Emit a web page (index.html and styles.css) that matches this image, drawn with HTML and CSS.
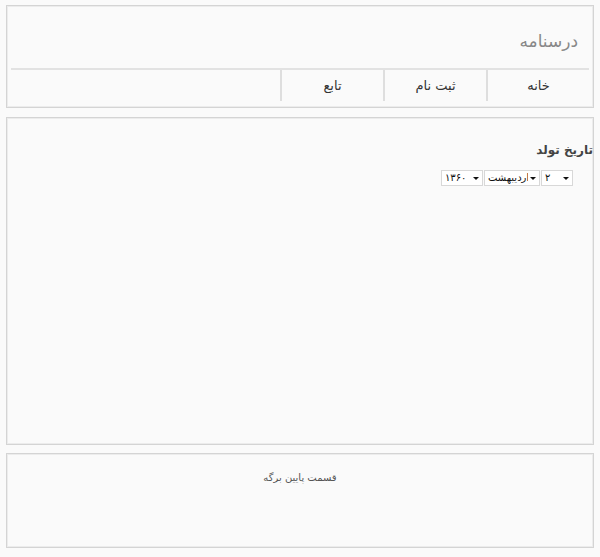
FILE: index.html
```html
<!DOCTYPE html>
<html lang="fa" dir="rtl">
<head>
    <meta charset="UTF-8">
    <title>درسنامه</title>
    <link rel="stylesheet" href="styles.css">
</head>
<body>
    <div class="header box">
        <h1 class="site-title">درسنامه</h1>
        <ul class="nav">
            <li><a href="#">خانه</a></li>
            <li><a href="#">ثبت نام</a></li>
            <li><a href="#">تابع</a></li>
        </ul>
    </div>

    <div class="content box">
        <h3>تاریخ تولد</h3>
        <div class="date-row">
            <span class="select-wrap">
                <select class="sel-day">
                    <option>۱</option>
                    <option selected>۲</option>
                    <option>۳</option>
                </select>
            </span>
            <span class="select-wrap">
                <select class="sel-month">
                    <option>فروردین</option>
                    <option selected>اردیبهشت</option>
                    <option>خرداد</option>
                </select>
            </span>
            <span class="select-wrap">
                <select class="sel-year">
                    <option>۱۳۵۹</option>
                    <option selected>۱۳۶۰</option>
                    <option>۱۳۶۱</option>
                </select>
            </span>
        </div>
    </div>

    <div class="footer box">
        <p>قسمت پایین برگه</p>
    </div>
</body>
</html>
```

FILE: styles.css
```css
* {
    margin: 0;
    padding: 0;
    box-sizing: border-box;
}

body {
    font-family: Tahoma, 'DejaVu Sans', sans-serif;
    background: #fafafa;
    color: #333;
    padding: 5px 6px;
}

.box {
    background: #fafafa;
    border: 1px solid #d4d4d4;
    box-shadow: inset 0 0 0 1px #ececec;
    margin-bottom: 9px;
}

.header {
    padding: 0 4px 5px;
    height: 103px;
}

.site-title {
    font-size: 17px;
    font-weight: normal;
    color: #888;
    height: 64px;
    line-height: 1;
    padding: 27px 11px 0 0;
    border-bottom: 2px solid #e2e2e2;
}

.nav {
    list-style: none;
    display: flex;
}

.nav li {
    width: 103px;
    height: 31px;
    border-left: 2px solid #dedede;
    text-align: center;
    line-height: 31px;
    font-size: 13px;
}

.nav a {
    color: #333;
    text-decoration: none;
}

.content {
    height: 328px;
    padding-top: 25px;
    margin-bottom: 8px;
}

.content h3 {
    font-size: 12px;
    font-weight: bold;
    color: #444;
    margin-bottom: 13px;
}

.date-row {
    display: flex;
    padding-right: 20px;
    gap: 1px;
}

.select-wrap {
    position: relative;
    display: block;
}

.select-wrap::after {
    content: "";
    position: absolute;
    right: 4px;
    top: 7px;
    border-left: 3px solid transparent;
    border-right: 3px solid transparent;
    border-top: 3px solid #111;
    pointer-events: none;
}

.date-row select {
    display: block;
    appearance: none;
    -webkit-appearance: none;
    direction: ltr;
    font-family: Tahoma, 'DejaVu Sans', sans-serif;
    font-size: 10px;
    line-height: 14px;
    height: 16px;
    border: 1px solid #d8d8d8;
    border-radius: 0;
    background: #fff;
    color: #111;
    padding: 0 11px 0 3px;
}

.sel-day {
    width: 32px;
}

.sel-month {
    width: 56px;
}

.sel-year {
    width: 42px;
}

.footer {
    height: 95px;
    margin-bottom: 0;
    padding-top: 18px;
    text-align: center;
}

.footer p {
    font-size: 10px;
    color: #555;
}
```
